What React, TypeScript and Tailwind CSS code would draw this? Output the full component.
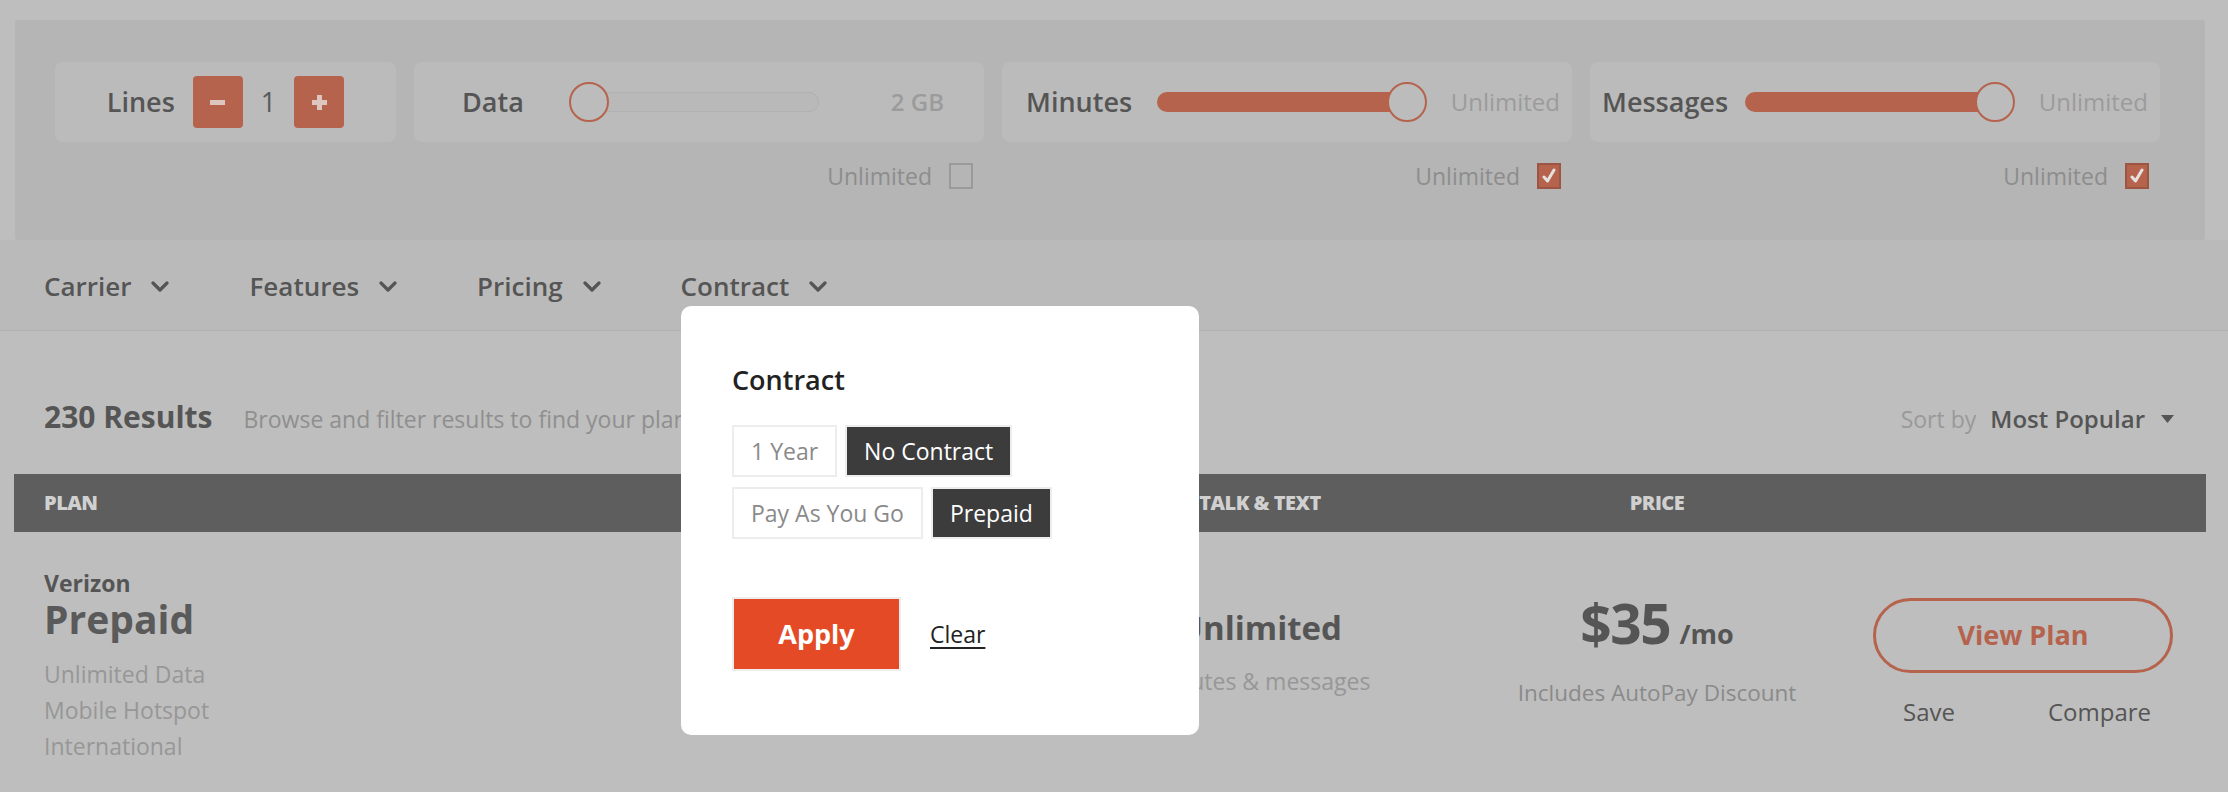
import React from "react";

const ORANGE = "#b5634d";

function Chevron() {
  return (
    <svg width="18" height="11" viewBox="0 0 18 11" className="text-[#555] shrink-0">
      <polyline points="2,2 9,9 16,2" fill="none" stroke="currentColor" strokeWidth="3.2" strokeLinecap="round" strokeLinejoin="round" />
    </svg>
  );
}

function Slider({ value, width }: { value: number; width: number }) {
  // value 0..1, thumb sits at that position
  const left = value * (width - 40);
  return (
    <div className="relative h-[40px] shrink-0" style={{ width }}>
      {value === 0 ? (
        <div className="absolute left-0 right-0 top-[10px] h-[20px] rounded-full bg-[#b9b9b9] border border-[#b1b1b1]" />
      ) : (
        <div className="absolute left-0 top-[10px] h-[20px] rounded-full bg-[#b5634d]" style={{ width: left + 20 }} />
      )}
      <div
        className="absolute top-0 w-[40px] h-[40px] rounded-full bg-[#bcbcbc] border-2 border-[#b5634d]"
        style={{ left }}
      />
    </div>
  );
}

function Check({ checked }: { checked: boolean }) {
  if (!checked)
    return <div className="w-[24px] h-[26px] border-2 border-[#9a9a9a]" />;
  return (
    <div className="w-[24px] h-[26px] bg-[#b5634d] border-2 border-[#9c5443] flex items-center justify-center">
      <svg width="14" height="16" viewBox="0 0 14 16">
        <polyline points="2,9 5.5,13 12,2" fill="none" stroke="#e6e0de" strokeWidth="3" strokeLinecap="round" strokeLinejoin="round" />
      </svg>
    </div>
  );
}

function UnlimitedBox({ checked }: { checked: boolean }) {
  return (
    <div className="w-[570px] shrink-0 flex items-center justify-end gap-[17px] pr-[11px]">
      <span className="text-[23px] leading-none text-[#8d8d8d]">Unlimited</span>
      <Check checked={checked} />
    </div>
  );
}

function Option({ label, active }: { label: string; active?: boolean }) {
  return (
    <div className="border-2 border-[#ededed]">
      <div
        className={
          active
            ? "h-[48px] px-[17px] flex items-center bg-[#3c3c3c] text-white text-[23px]"
            : "h-[48px] px-[17px] flex items-center bg-white text-[#8a8a8a] text-[23px]"
        }
      >
        {label}
      </div>
    </div>
  );
}

export default function App() {
  return (
    <div className="relative w-full h-[792px] overflow-hidden bg-[#bebebe] font-['Open_Sans',sans-serif] text-[#555]">
      {/* filter panel */}
      <div className="pt-[20px] pl-[15px] pr-[23px]">
        <div className="h-[220px] bg-[#b5b5b5] rounded-[3px] pt-[42px] px-[40px]">
          <div className="flex gap-[18px] h-[80px]">
            <div className="w-[341px] shrink-0 rounded-[8px] bg-[#bbbbbb] flex items-center justify-center gap-[18px]">
              <span className="text-[27px] font-semibold">Lines</span>
              <div className="w-[50px] h-[52px] rounded-[4px] bg-[#b5634d] flex items-center justify-center">
                <div className="w-[15px] h-[5px] bg-[#dcc6bf]" />
              </div>
              <span className="text-[27px] text-[#5a5a5a]">1</span>
              <div className="w-[50px] h-[52px] rounded-[4px] bg-[#b5634d] flex items-center justify-center relative">
                <div className="w-[15px] h-[5px] bg-[#dcc6bf]" />
                <div className="absolute w-[5px] h-[15px] bg-[#dcc6bf]" />
              </div>
            </div>
            <div className="w-[570px] shrink-0 rounded-[8px] bg-[#bbbbbb] flex items-center pl-[48px] pr-[40px]">
              <span className="text-[27px] font-semibold w-[107px] shrink-0">Data</span>
              <Slider value={0} width={250} />
              <span className="ml-auto text-[24px] font-semibold text-[#9b9b9b]">2 GB</span>
            </div>
            <div className="w-[570px] shrink-0 rounded-[8px] bg-[#bbbbbb] flex items-center pl-[24px] pr-[12px]">
              <span className="text-[27px] font-semibold w-[131px] shrink-0">Minutes</span>
              <Slider value={1} width={270} />
              <span className="ml-auto text-[24px] text-[#9b9b9b]">Unlimited</span>
            </div>
            <div className="w-[570px] shrink-0 rounded-[8px] bg-[#bbbbbb] flex items-center pl-[12px] pr-[12px]">
              <span className="text-[27px] font-semibold w-[143px] shrink-0">Messages</span>
              <Slider value={1} width={270} />
              <span className="ml-auto text-[24px] text-[#9b9b9b]">Unlimited</span>
            </div>
          </div>
          <div className="flex gap-[18px] h-[28px] mt-[20px]">
            <div className="w-[341px] shrink-0" />
            <UnlimitedBox checked={false} />
            <UnlimitedBox checked={true} />
            <UnlimitedBox checked={true} />
          </div>
        </div>
      </div>

      {/* filter nav */}
      <div className="h-[91px] bg-[#bababa] border-b border-[#b2b2b2] flex gap-[80px] px-[44px] pt-[33px]">
        {["Carrier", "Features", "Pricing", "Contract"].map((n) => (
          <div key={n} className="flex items-center gap-[20px] h-[26px]">
            <span className="text-[26px] leading-none font-semibold">{n}</span>
            <Chevron />
          </div>
        ))}
      </div>

      {/* results row */}
      <div className="h-[143px] pt-[71px] pl-[44px] pr-[54px] flex items-baseline justify-between">
        <div className="flex items-baseline gap-[31px]">
          <span className="text-[30px] leading-none font-bold">230 Results</span>
          <span className="text-[23px] leading-none text-[#8f8f8f]">Browse and filter results to find your plan</span>
        </div>
        <div className="flex items-baseline">
          <span className="text-[23px] leading-none text-[#999]">Sort by</span>
          <span className="ml-[14px] text-[24px] leading-none font-semibold">Most Popular</span>
          <svg width="13" height="9" viewBox="0 0 13 9" className="ml-[16px] self-center">
            <polygon points="0,0 13,0 6.5,8" fill="#555" />
          </svg>
        </div>
      </div>

      {/* table */}
      <div className="ml-[14px] mr-[22px]">
        <div className="h-[58px] bg-[#5e5e5e] flex items-center pl-[30px] text-[20px] font-extrabold text-[#d0d0d0] tracking-tight">
          <div className="w-[736px]">PLAN</div>
          <div className="w-[320px]" />
          <div className="w-[320px] text-center">TALK &amp; TEXT</div>
          <div className="w-[414px] pl-[60px] text-center">PRICE</div>
        </div>
        <div className="flex pl-[30px]">
          <div className="w-[736px] pt-[40px]">
            <div className="text-[23px] leading-none font-bold">Verizon</div>
            <div className="mt-[4px] text-[39px] leading-none font-bold text-[#5a5a5a]">Prepaid</div>
            <div className="mt-[18px] text-[23px] leading-[36px] text-[#979797]">
              <div>Unlimited Data</div>
              <div>Mobile Hotspot</div>
              <div>International</div>
            </div>
          </div>
          <div className="w-[320px]" />
          <div className="w-[320px] pt-[79px] text-center">
            <div className="text-[33px] leading-none font-bold">Unlimited</div>
            <div className="mt-[26px] text-[23px] leading-none text-[#979797]">Minutes &amp; messages</div>
          </div>
          <div className="w-[414px] pl-[60px] pt-[63px] flex flex-col items-center">
            <div className="flex items-baseline gap-[9px]">
              <span className="text-[55px] leading-none font-bold tracking-tight">$35</span>
              <span className="text-[27px] leading-none font-bold">/mo</span>
            </div>
            <div className="mt-[32px] text-[22.5px] leading-none text-[#8a8a8a]">Includes AutoPay Discount</div>
          </div>
          <div className="ml-[39px] w-[300px] pt-[66px]">
            <div className="h-[75px] rounded-full border-[3px] border-[#b5634d] flex items-center justify-center text-[27px] font-bold" style={{ color: ORANGE }}>
              View Plan
            </div>
            <div className="mt-[27px] flex justify-between pl-[30px] pr-[22px] text-[24px] leading-none text-[#555]">
              <span>Save</span>
              <span>Compare</span>
            </div>
          </div>
        </div>
      </div>

      {/* contract dropdown */}
      <div className="absolute left-[681px] top-[306px] w-[518px] h-[429px] rounded-[10px] bg-white pl-[51px] pt-[57px]">
        <div className="text-[27px] leading-[34px] font-semibold text-[#222]">Contract</div>
        <div className="mt-[28px] flex gap-[8px]">
          <Option label="1 Year" />
          <Option label="No Contract" active />
        </div>
        <div className="mt-[10px] flex gap-[8px]">
          <Option label="Pay As You Go" />
          <Option label="Prepaid" active />
        </div>
        <div className="mt-[58px] flex items-center gap-[29px]">
          <div className="border-2 border-[#ededed]">
            <div className="w-[165px] h-[70px] bg-[#e34a25] flex items-center justify-center text-white text-[27px] font-bold">
              Apply
            </div>
          </div>
          <span className="text-[23px] text-[#222] underline underline-offset-4">Clear</span>
        </div>
      </div>
    </div>
  );
}
